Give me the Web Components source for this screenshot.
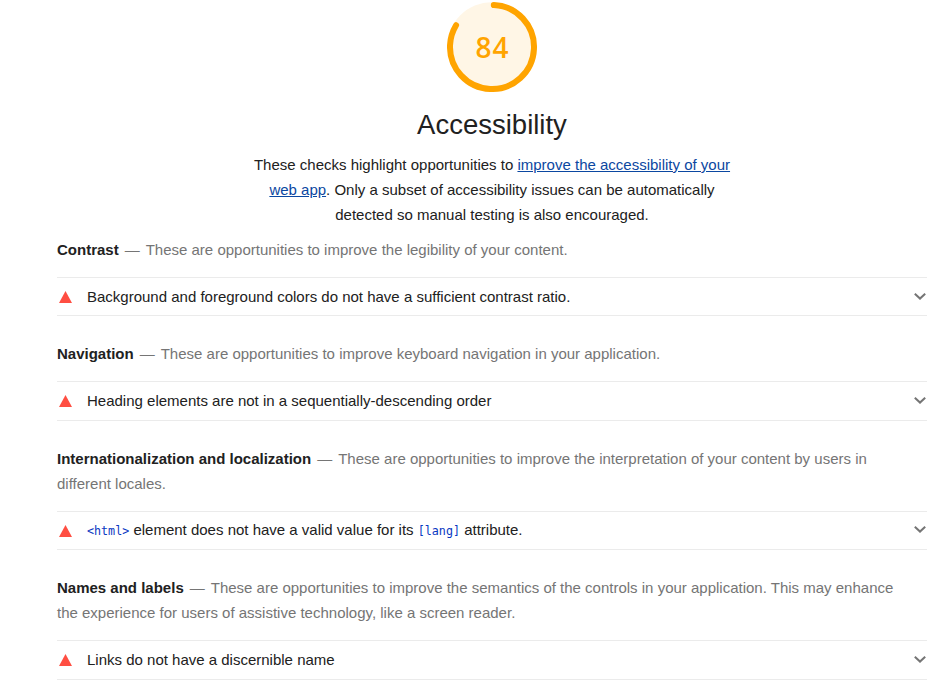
<!DOCTYPE html>
<html lang="en">
<head>
<meta charset="utf-8">
<title>Accessibility</title>
<style>
body { margin: 0; background: #fff; color: #212121; font: 15px/25px "Liberation Sans", Arial, sans-serif; }
a { color: #0b47a1; text-decoration: underline; }
code { font: 11.7px/20px "DejaVu Sans Mono", monospace; color: #0938c2; }
</style>
</head>
<body>
<lh-category>
  <lh-gauge score="84"></lh-gauge>
  <lh-intro heading="Accessibility">These checks highlight opportunities to <a href="#">improve the accessibility of your web app</a>. Only a subset of accessibility issues can be automatically detected so manual testing is also encouraged.</lh-intro>
  <lh-group label="Contrast" description="These are opportunities to improve the legibility of your content.">
    <lh-audit>Background and foreground colors do not have a sufficient contrast ratio.</lh-audit>
  </lh-group>
  <lh-group label="Navigation" description="These are opportunities to improve keyboard navigation in your application.">
    <lh-audit>Heading elements are not in a sequentially-descending order</lh-audit>
  </lh-group>
  <lh-group label="Internationalization and localization" description="These are opportunities to improve the interpretation of your content by users in different locales.">
    <lh-audit><code>&lt;html&gt;</code> element does not have a valid value for its <code>[lang]</code> attribute.</lh-audit>
  </lh-group>
  <lh-group label="Names and labels" description="These are opportunities to improve the semantics of the controls in your application. This may enhance the experience for users of assistive technology, like a screen reader.">
    <lh-audit>Links do not have a discernible name</lh-audit>
  </lh-group>
</lh-category>
<script>
class BaseElement extends HTMLElement {
  constructor() {
    super();
    this.attachShadow({ mode: "open" });
  }
  connectedCallback() {
    this.shadowRoot.innerHTML = this.render();
  }
}

customElements.define("lh-category", class extends BaseElement {
  render() {
    return `<style>:host { display: block; box-sizing: border-box; width: 927px; padding: 2px 0 0 57px; }</style><slot></slot>`;
  }
});

customElements.define("lh-gauge", class extends BaseElement {
  render() {
    const score = Number(this.getAttribute("score"));
    const length = 2 * Math.PI * 42;
    return `<style>
      :host { display: grid; justify-content: center; align-items: center; justify-items: center; height: 90px; }
      svg, span { grid-area: 1 / 1; }
      svg { display: block; }
      span { font: 600 28px/36px "Open Sans", sans-serif; letter-spacing: 1px; margin-left: 1px; color: #ffa400; }
    </style>
    <svg width="90" height="90" viewBox="0 0 90 90" fill="none">
      <circle cx="45" cy="45" r="44.8" fill="#fff6e6"/>
      <circle cx="45" cy="45" r="42" stroke="#ffa400" stroke-width="6" stroke-linecap="round" transform="rotate(-87.5 45 45)" stroke-dasharray="${length * score / 100 - 3} ${length}"/>
    </svg><span>${score}</span>`;
  }
});

customElements.define("lh-intro", class extends BaseElement {
  render() {
    return `<style>
      :host { display: block; width: 480px; margin: 0 auto; text-align: center; }
      h1 { margin: 13px 0 7px; font: 400 27.5px/40px "Liberation Sans", Arial, sans-serif; }
      p { margin: 0; }
    </style><h1>${this.getAttribute("heading")}</h1><p><slot></slot></p>`;
  }
});

customElements.define("lh-group", class extends BaseElement {
  render() {
    return `<style>
      :host { display: block; padding: 10px 0 15px; }
      p { margin: 0 0 15px; padding-right: 20px; color: #757575; }
      b { color: #212121; }
      b::after { content: "—"; font-weight: 400; color: #757575; margin: 0 6px; }
    </style><p><b>${this.getAttribute("label")}</b>${this.getAttribute("description")}</p><slot></slot>`;
  }
});

customElements.define("lh-audit", class extends BaseElement {
  render() {
    return `<style>
      :host { display: flex; align-items: center; box-sizing: border-box; height: 39.4px; border: solid #ebebeb; border-width: 1px 0; }
      .fail { width: 13px; height: 12px; margin: 0.4px 15px 0 2px; flex: none; }
      .title { flex: 1; margin-bottom: 1px; }
      .chevron { width: 12px; height: 8px; margin-right: 1px; flex: none; }
    </style>
    <svg class="fail" viewBox="0 0 13 12"><path d="M6.5 0 13 12H0Z" fill="#ff4e42"/></svg>
    <span class="title"><slot></slot></span>
    <svg class="chevron" viewBox="0 0 12 8"><path d="M0.8 0.8 6 5.6 11.2 0.8" fill="none" stroke="#757575" stroke-width="2"/></svg>`;
  }
});
</script>
</body>
</html>
